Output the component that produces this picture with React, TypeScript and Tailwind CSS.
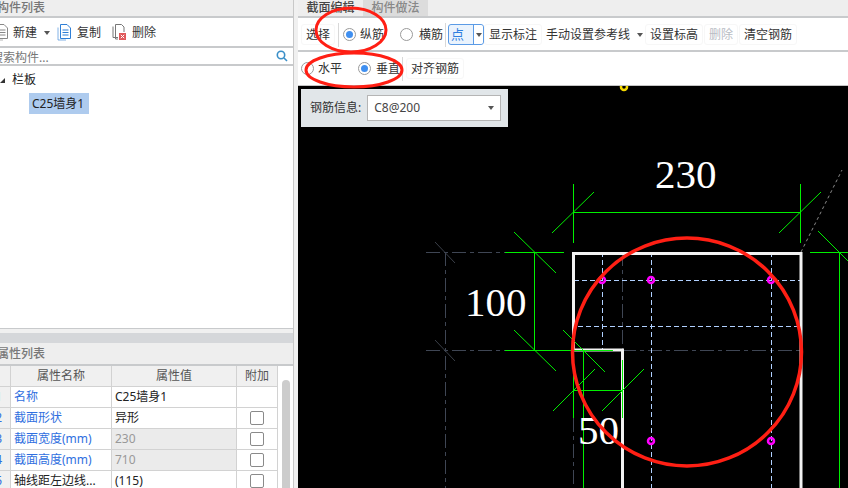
import type { ReactNode } from "react";

const rows = [
  { no: "1", name: "名称", value: "C25墙身1", blue: true, check: false, locked: false },
  { no: "2", name: "截面形状", value: "异形", blue: true, check: true, locked: false },
  { no: "3", name: "截面宽度(mm)", value: "230", blue: true, check: true, locked: true },
  { no: "4", name: "截面高度(mm)", value: "710", blue: true, check: true, locked: true },
  { no: "5", name: "轴线距左边线...", value: "(115)", blue: false, check: true, locked: false },
];

const Radio = ({ on, className = "" }: { on?: boolean; className?: string }) => (
  <span
    className={`flex items-center justify-center w-[13px] h-[13px] shrink-0 rounded-full border border-[#9a9a9a] bg-white ${className}`}
  >
    {on && <span className="w-[7px] h-[7px] rounded-full bg-[#3f8ff0]" />}
  </span>
);

const Btn = ({ children, className = "" }: { children: ReactNode; className?: string }) => (
  <span className={`flex items-center h-[21px] px-[4px] rounded-[3px] border border-[#f7f7f7] ${className}`}>
    {children}
  </span>
);

const Caret = ({ className = "" }: { className?: string }) => (
  <span className={`w-0 h-0 border-x-[3.5px] border-x-transparent border-t-[4px] border-t-[#555] ${className}`} />
);

const Divider = ({ className = "" }: { className?: string }) => (
  <span className={`w-px h-[24px] bg-[#d8d8d8] ${className}`} />
);

const DocIcon = ({ color, className = "" }: { color: string; className?: string }) => (
  <svg width="15" height="17" viewBox="0 0 15 17" fill="none" className={className}>
    <path d="M1 3.5V16H9" stroke={color} strokeOpacity="0.6" />
    <path d="M3.5 .5H10L13.5 4V14.5H3.5Z" fill="white" stroke={color} />
    <path d="M5.5 6H11.5M5.5 8.5H11.5M5.5 11H11.5" stroke={color} />
  </svg>
);

const DeleteIcon = () => (
  <svg width="16" height="17" viewBox="0 0 16 17" fill="none">
    <path d="M1 2.5V13.5H6" stroke="#777" />
    <path d="M3.5 .5H9.5L12 3V8M3.5 .5V15H6" stroke="#777" />
    <rect x="7" y="9" width="7" height="7" fill="#e0585a" />
    <path d="M8.8 10.8L12.2 14.2M12.2 10.8L8.8 14.2" stroke="white" />
  </svg>
);

const Drawing = () => (
  <svg className="w-[550px] h-[402px] block" viewBox="298 86 550 402" fill="none">
    {/* gray axis lines */}
    <g stroke="#3f4654" strokeDasharray="14 4 4 4">
      <path d="M426 252.5H505M426 350.5H505M622 350.5H800" />
      <path d="M445.5 252V488M622.5 252V350M573.5 418V488" />
    </g>
    <path d="M435 242L455 263M435 340L455 361" stroke="#3a3f48" />
    <path d="M801 252L842 170" stroke="#8a8a8a" strokeDasharray="3 3" />

    {/* light blue rebar guides */}
    <g stroke="#b0d0ff" strokeDasharray="5 3">
      <path d="M574 280.5H800M578 326.5H800" />
      <path d="M602.5 252V350M651.5 252V488M771.5 252V488" />
    </g>

    {/* section outline */}
    <path d="M573.5 350V253.5H801V488M573 350H622.5V488" stroke="#f2f2f2" strokeWidth="3" />

    {/* dimension lines */}
    <g stroke="#00f000" strokeWidth="1">
      <path d="M573.5 212.5H800.5M573.5 184V243M800.5 184V243" />
      <path d="M552 233L594 192M779 233L821 192" />
      <path d="M505 252.5H564M505 350.5H613M534.5 252V350" />
      <path d="M514 232L556 273M514 330L556 371" />
      <path d="M573.5 390.5H622.5M573.5 360V418M622.5 360V418M583.5 350V488" />
      <path d="M553 411L595 369M602 411L644 369M563 330L605 372" />
      <path d="M810 252.5H848M839.5 252V488M818 231L860 273" />
    </g>

    {/* rebar points */}
    <g stroke="#ff00ff" strokeWidth="2.5">
      <circle cx="602" cy="280" r="3" />
      <circle cx="651" cy="280" r="3" />
      <circle cx="771" cy="280" r="3" />
      <circle cx="651" cy="441" r="3" />
      <circle cx="771" cy="441" r="3" />
    </g>
    <circle cx="624" cy="87" r="3" stroke="#f5d800" strokeWidth="2.5" />

    <g fill="white" fontFamily="'Liberation Serif', serif" fontSize="41">
      <text x="655" y="188">230</text>
      <text x="465" y="316">100</text>
      <text x="578" y="444">50</text>
    </g>
  </svg>
);

export default function App() {
  return (
    <div
      className="relative flex w-[848px] h-[488px] overflow-hidden bg-[#f0f0f0] text-[12px] leading-none text-[#333]"
      style={{ fontFamily: "'Noto Sans', 'Noto Sans CJK SC', sans-serif" }}
    >
      {/* left column */}
      <div className="flex flex-col w-[294px] shrink-0 mr-[4px] border-r border-[#c8c8c8]">
        <div className="flex items-center h-[18px] shrink-0 bg-[#eeeeee] border-b-2 border-[#c8cacc] text-[#777] font-medium">
          <span className="-ml-[3px]">构件列表</span>
        </div>
        <div className="flex items-center h-[28px] shrink-0 pt-[1px] bg-white">
          <DocIcon color="#888" className="-ml-[6px]" />
          <span className="ml-[4px] pt-[1px]">新建</span>
          <Caret className="ml-[7px]" />
          <DocIcon color="#2f7fd6" className="ml-[7px]" />
          <span className="ml-[5px] pt-[1px]">复制</span>
          <span className="ml-[11px]"><DeleteIcon /></span>
          <span className="ml-[4px] pt-[1px]">删除</span>
        </div>
        <div className="flex items-center justify-between h-[20px] shrink-0 bg-white border-y-2 border-[#c8cacc] pr-[5px]">
          <span className="-ml-[9px] pt-[3px] text-[#777]">搜索构件...</span>
          <svg width="12" height="12" viewBox="0 0 12 12" fill="none" stroke="#3a8fc8" strokeWidth="1.6">
            <circle cx="5" cy="5" r="3.7" />
            <path d="M8 8L11 11" />
          </svg>
        </div>
        <div className="h-[263px] shrink-0 bg-white border-b border-[#c8cacc]">
          <div className="flex items-center h-[27px] pt-[1px]">
            <span className="w-0 h-0 border-l-[5px] border-l-transparent border-b-[5px] border-b-[#333]" />
            <span className="ml-[7px] text-[#222]">栏板</span>
          </div>
          <div className="flex items-center w-[60px] h-[21px] ml-[29px] pl-[3px] bg-[#aecbee] text-[#222]">C25墙身1</div>
        </div>

        <div className="h-[4px] shrink-0" />
        <div className="h-[10px] shrink-0 bg-[#d5d7da]" />
        <div className="flex items-center h-[23px] shrink-0 bg-[#eeeeee] border-b-2 border-[#c8cacc] text-[#777] font-medium">
          <span className="-ml-[3px]">属性列表</span>
        </div>

        <div className="flex shrink-0 bg-white">
          <div className="w-[278px] shrink-0">
            <div className="grid grid-cols-[11px_101px_125px_41px] h-[21px] bg-[#f0f0f0] border-b border-[#d2d2d2] text-[#555]">
              <span className="border-r border-[#d2d2d2]" />
              <span className="flex items-center justify-center border-r border-[#d2d2d2]">属性名称</span>
              <span className="flex items-center justify-center border-r border-[#d2d2d2]">属性值</span>
              <span className="flex items-center justify-center border-r border-[#d2d2d2]">附加</span>
            </div>
            {rows.map((row) => (
              <div key={row.no} className="grid grid-cols-[11px_101px_125px_41px] h-[21px] border-b border-[#d2d2d2]">
                <span className="flex items-center justify-end pr-[8px] bg-[#f0f0f0] border-r border-[#d2d2d2] text-[#2f6fe0]">
                  {row.no}
                </span>
                <span
                  className={`flex items-center pl-[3px] border-r border-[#d2d2d2] whitespace-nowrap ${
                    row.blue ? "text-[#2f6fe0]" : "text-[#222]"
                  }`}
                >
                  {row.name}
                </span>
                <span
                  className={`flex items-center pl-[3px] border-r border-[#d2d2d2] ${
                    row.locked ? "bg-[#ebebeb] text-[#999]" : "text-[#222]"
                  }`}
                >
                  {row.value}
                </span>
                <span className="flex items-center justify-center border-r border-[#d2d2d2]">
                  {row.check && <span className="w-[14px] h-[14px] rounded-[2px] border border-[#8a8a8a] bg-white" />}
                </span>
              </div>
            ))}
          </div>
          <div className="flex-1 pl-[4px] pt-[14px]">
            <div className="w-[8px] h-[120px] rounded-[4px] bg-[#cccccc]" />
          </div>
        </div>
      </div>

      {/* right column */}
      <div className="flex flex-col flex-1 min-w-0">
        <div className="flex h-[18px] bg-[#eeeeee] border-b-2 border-[#c8cacc]">
          <span className="flex items-center justify-center w-[65px] h-[16px] font-medium text-[#444]">截面编辑</span>
          <span className="flex items-center justify-center w-[65px] h-[16px] bg-[#dcdcdc] font-medium text-[#888]">构件做法</span>
        </div>

        <div className="flex items-center h-[34px] pl-[3px] pt-[1px] bg-white border-b-2 border-[#c8cacc]">
          <Btn>选择</Btn>
          <Divider className="ml-[3px]" />
          <Radio on className="ml-[4px]" />
          <span className="ml-[4px] pt-[1px]">纵筋</span>
          <Radio className="ml-[16px]" />
          <span className="ml-[6px] pt-[1px]">横筋</span>
          <Divider className="ml-[2px]" />
          <span className="flex items-center ml-[2px] h-[21px] w-[36px] rounded-[3px] border border-[#5b9be6] bg-[#eaf3fd] text-[#2f7fe0] text-[13px]">
            <span className="w-[25px] pl-[2px]">点</span>
            <span className="flex items-center justify-center w-[10px] h-full border-l border-[#5b9be6] bg-white rounded-r-[3px]">
              <Caret />
            </span>
          </span>
          <Btn>显示标注</Btn>
          <span className="ml-[4px] pt-[1px]">手动设置参考线</span>
          <Caret className="ml-[7px]" />
          <Btn className="ml-[2px]">设置标高</Btn>
          <Btn className="ml-[1px] text-[#b8bcc4]">删除</Btn>
          <Btn className="ml-[1px]">清空钢筋</Btn>
        </div>

        <div className="flex items-center h-[34px] pl-[3px] bg-white border-b border-[#c4c4c4]">
          <Radio />
          <span className="ml-[4px]">水平</span>
          <Radio on className="ml-[16px]" />
          <span className="ml-[5px]">垂直</span>
          <Divider className="ml-[2px]" />
          <Btn className="ml-[3px]">对齐钢筋</Btn>
        </div>

        <div className="relative flex-1 bg-black">
          <Drawing />
          <div className="absolute left-[3px] top-[3px] flex items-center w-[207px] h-[38px] pl-[9px] bg-[#e1e6e9]">
            <span>钢筋信息:</span>
            <div className="flex items-center justify-between w-[134px] h-[26px] ml-[6px] pl-[6px] pr-[6px] bg-white border border-[#b5b5b5] text-[#444]">
              C8@200
              <Caret />
            </div>
          </div>
        </div>
      </div>

      {/* hand drawn red marks on top of the screenshot */}
      <svg className="absolute inset-0 w-[848px] h-[488px] pointer-events-none" viewBox="0 0 848 488" fill="none" stroke="#ff1f14">
        <ellipse cx="351" cy="30" rx="35" ry="22" strokeWidth="3" />
        <ellipse cx="354" cy="70" rx="48" ry="17" strokeWidth="3" />
        <ellipse cx="687" cy="352" rx="114.5" ry="114" strokeWidth="3.5" />
      </svg>
    </div>
  );
}
